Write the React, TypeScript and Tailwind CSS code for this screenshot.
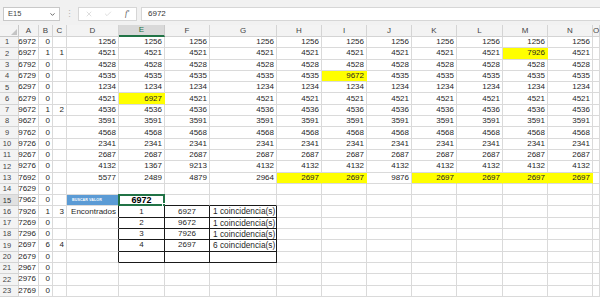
import React from 'react';
import { X, Check, ChevronDown } from 'lucide-react';

const COLS = ['A', 'B', 'C', 'D', 'E', 'F', 'G', 'H', 'I', 'J', 'K', 'L', 'M', 'N', 'O'];

const colA = [6972, 6927, 6792, 6729, 6297, 6279, 9672, 9627, 9762, 9726, 9267, 9276, 7692, 7629, 7962, 7926, 7269, 7296, 2697, 2679, 2967, 2976, 2769];
const colB = [0, 1, 0, 0, 0, 0, 1, 0, 0, 0, 0, 0, 0, 0, 0, 1, 0, 0, 6, 0, 0, 0, 0];
const colC: Record<number, number> = { 2: 1, 7: 2, 16: 3, 19: 4 };

// base value of D..N for rows 1-11
const base = [1256, 4521, 4528, 4535, 1234, 4521, 4536, 3591, 4568, 2341, 2687];
const row12 = [4132, 1367, 9213, 4132, 4132, 4132, 4132, 4132, 4132, 4132, 4132];
const row13 = [5577, 2489, 4879, 2964, 2697, 2697, 9876, 2697, 2697, 2697, 2697];

const overrides: Record<string, number> = { M2: 7926, I4: 9672, E6: 6927 };
const yellow = new Set(['M2', 'I4', 'E6', 'H13', 'I13', 'K13', 'L13', 'M13', 'N13']);

const found: [number, number, string][] = [
  [1, 6927, '1 coincidencia(s)'],
  [2, 9672, '1 coincidencia(s)'],
  [3, 7926, '1 coincidencia(s)'],
  [4, 2697, '6 coincidencia(s)'],
];

const inTable = (r: number, c: number) => r >= 16 && r <= 20 && c >= 4 && c <= 6;

type CellData = { text?: string | number; align: 'l' | 'c' | 'r'; bold?: boolean; wide?: boolean; fill?: 'yellow' | 'blue' };

function getCell(r: number, c: number): CellData {
  const col = COLS[c];
  if (c === 0) return { text: colA[r - 1], align: 'r' };
  if (c === 1) return { text: colB[r - 1], align: 'r' };
  if (c === 2) return { text: colC[r], align: 'r' };
  if (c >= 3 && c <= 13 && r <= 13) {
    const key = col + r;
    let v: number;
    if (r === 12) v = row12[c - 3];
    else if (r === 13) v = row13[c - 3];
    else v = overrides[key] ?? base[r - 1];
    return { text: v, align: 'r', fill: yellow.has(key) ? 'yellow' : undefined };
  }
  if (r === 15 && c === 3) return { text: 'BUSCAR VALOR', align: 'l', fill: 'blue' };
  if (r === 15 && c === 4) return { text: 6972, align: 'c', bold: true };
  if (r === 16 && c === 3) return { text: 'Encontrados', align: 'r' };
  if (r >= 16 && r <= 19 && c >= 4 && c <= 6) {
    const f = found[r - 16];
    if (c === 4) return { text: f[0], align: 'c' };
    if (c === 5) return { text: f[1], align: 'c' };
    return { text: f[2], align: 'l', wide: true };
  }
  return { align: 'r' };
}

function Cell({ r, c }: { r: number; c: number }) {
  const d = getCell(r, c);
  const rightBlack = inTable(r, c) || inTable(r, c + 1);
  const bottomBlack = inTable(r, c) || inTable(r + 1, c);
  const selected = r === 15 && c === 4;

  const fill = d.fill === 'yellow' ? 'bg-[#ffff00]' : d.fill === 'blue' ? 'bg-[#5b9bd5]' : 'bg-white';
  const rightBorder = rightBlack ? 'border-r-[#1a1a1a]' : d.fill === 'yellow' ? 'border-r-[#ffff00]' : 'border-r-[#dadada]';
  const bottomBorder = bottomBlack ? 'border-b-[#1a1a1a]' : 'border-b-[#dadada]';
  const align = d.align === 'r' ? 'justify-end pr-[2px]' : d.align === 'c' ? 'justify-center' : 'justify-start pl-[3px]';
  const size = d.wide ? 'text-[8.3px]' : 'text-[8px]';

  return (
    <div className={`relative flex items-center overflow-visible whitespace-nowrap border-r border-b ${fill} ${rightBorder} ${bottomBorder} ${align}`}>
      {d.fill === 'blue' ? (
        <span className="pl-[2px] text-[3.6px] font-bold tracking-[0.1px] text-white">{d.text}</span>
      ) : (
        <span className={`leading-none ${d.bold ? 'text-[9px] font-bold text-black' : `${size} text-[#1f1f1f]`}`}>{d.text}</span>
      )}
      {selected && (
        <div className="absolute -left-[1px] -top-[1px] -right-[1px] -bottom-[1px] border-2 border-[#217346]">
          <div className="absolute -bottom-[3px] -right-[3px] h-[4px] w-[4px] border border-white bg-[#217346]" />
        </div>
      )}
    </div>
  );
}

export default function App() {
  const rows = Array.from({ length: 23 }, (_, i) => i + 1);

  return (
    <div className="h-[297px] w-[600px] overflow-hidden bg-white font-['Liberation_Sans',Arial,sans-serif] text-[#262626]">
      {/* Formula bar */}
      <div className="flex h-[25px] items-start bg-[#f1f1f1] pt-[7px]">
        <div className="ml-[3px] flex h-[14px] w-[57px] items-center justify-between border border-[#c8c8c8] bg-white pl-[4px] pr-[3px]">
          <span className="text-[7.5px] text-[#444]">E15</span>
          <ChevronDown size={7} strokeWidth={3} className="text-[#555]" />
        </div>
        <div className="flex h-[14px] w-[18px] items-center justify-center text-[9px] leading-none text-[#b5b5b5]">⋮</div>
        <div className="flex h-[14px] w-[59px] items-center border border-[#d6d6d6] bg-white">
          <div className="flex w-[20px] justify-center">
            <X size={8} strokeWidth={1.5} className="text-[#bdbdbd]" />
          </div>
          <div className="flex w-[20px] justify-center">
            <Check size={8} strokeWidth={1.5} className="text-[#bdbdbd]" />
          </div>
          <div className="flex w-[18px] justify-center font-['Liberation_Serif',serif] text-[8px] italic text-[#555]">
            f<span className="text-[5px] leading-none">x</span>
          </div>
        </div>
        <div className="ml-[4px] flex h-[14px] flex-1 items-center border border-[#d6d6d6] border-r-0 bg-white pl-[6px]">
          <span className="text-[8px] text-[#333]">6972</span>
        </div>
      </div>

      {/* Sheet */}
      <div className="grid grid-cols-[19px_20px_14px_14px_52px_46px_45px_67px_45px_45px_45px_45px_46px_45px_45px_1fr] grid-rows-[12px] auto-rows-[11.3px]">
        <div className="relative border-r border-b border-[#c9c9c9] bg-[#f3f3f3]">
          <svg className="absolute bottom-[1px] right-[1px]" width="6" height="6" viewBox="0 0 6 6">
            <polygon points="6,0 6,6 0,6" fill="#c4c4c4" />
          </svg>
        </div>
        {COLS.map((col, i) => (
          <div
            key={col}
            className={`flex items-center justify-center border-r text-[8px] leading-none ${
              i === 4
                ? 'border-b-2 border-r-[#c9c9c9] border-b-[#217346] bg-[#d9d9d9] text-[#217346]'
                : 'border-b border-[#d4d4d4] bg-[#f3f3f3] text-[#444]'
            }`}
          >
            {col}
          </div>
        ))}

        {rows.map((r) => (
          <React.Fragment key={r}>
            <div
              className={`flex items-center justify-center border-r border-b pr-[4px] text-[7.5px] leading-none ${
                r === 15 ? 'border-[#c9c9c9] bg-[#e1e1e1] text-[#333]' : 'border-[#d4d4d4] bg-[#f3f3f3] text-[#444]'
              }`}
            >
              {r}
            </div>
            {COLS.map((_, c) => (
              <Cell key={c} r={r} c={c} />
            ))}
          </React.Fragment>
        ))}
      </div>
    </div>
  );
}
